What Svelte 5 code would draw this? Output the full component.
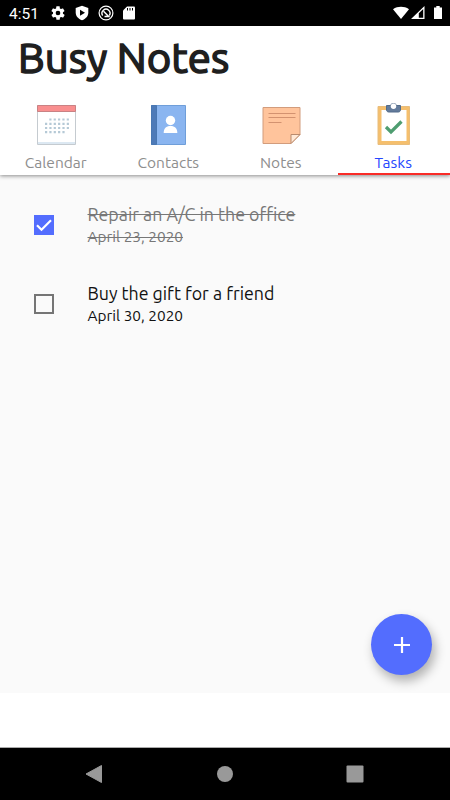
<script lang="ts">
  type Task = { title: string; date: string; done: boolean };

  const tabs = ["Calendar", "Contacts", "Notes", "Tasks"];
  let active = $state("Tasks");

  let tasks: Task[] = $state([
    { title: "Repair an A/C in the office", date: "April 23, 2020", done: true },
    { title: "Buy the gift for a friend", date: "April 30, 2020", done: false },
  ]);
</script>

<div class="screen">
  <!-- Status bar -->
  <div class="status">
    <span class="time">4:51</span>
    <svg width="16" height="16" viewBox="0 0 24 24" fill="#fff">
      <path
        fill-rule="evenodd"
        d="M19.4 13a7.5 7.5 0 0 0 0-2l2.1-1.6a.5.5 0 0 0 .1-.6l-2-3.5a.5.5 0 0 0-.6-.2l-2.5 1a7.3 7.3 0 0 0-1.7-1L14.5 2.4A.5.5 0 0 0 14 2h-4a.5.5 0 0 0-.5.4l-.4 2.7c-.6.2-1.2.6-1.7 1l-2.5-1a.5.5 0 0 0-.6.2l-2 3.5a.5.5 0 0 0 .1.6L4.6 11a7.5 7.5 0 0 0 0 2l-2.1 1.6a.5.5 0 0 0-.1.6l2 3.5c.1.2.4.3.6.2l2.5-1c.5.4 1.1.7 1.7 1l.4 2.7c0 .2.2.4.5.4h4c.3 0 .5-.2.5-.4l.4-2.7c.6-.3 1.2-.6 1.7-1l2.5 1c.2.1.5 0 .6-.2l2-3.5a.5.5 0 0 0-.1-.6zM12 15.5a3.5 3.5 0 1 1 0-7 3.5 3.5 0 0 1 0 7z"
      />
    </svg>
    <svg width="16" height="16" viewBox="0 0 16 16">
      <path d="M8 .7 14.3 3v4.500c0 3.600-2.500 6.300-6.300 7.800-3.800-1.500-6.300-4.200-6.300-7.800V3z" fill="#fff" />
      <path d="M6 4.700v6l5-3z" fill="#000" />
    </svg>
    <svg width="16" height="16" viewBox="0 0 16 16" fill="none" stroke="#fff">
      <circle cx="8" cy="8" r="6.900" stroke-width="1.200" />
      <path d="M4.700 10.500A4 4 0 1 1 11.300 10.500" stroke-width="1.400" />
      <path d="M5.500 6.300 10.700 11.500H6.500" stroke-width="1.500" />
    </svg>
    <svg width="14" height="16" viewBox="0 0 14 16">
      <path d="M5 1.500h7a1 1 0 0 1 1 1v11a1 1 0 0 1-1 1H2a1 1 0 0 1-1-1v-8z" fill="#fff" />
      <path d="M5.500 3v2.500M8 3v2.500M10.500 3v2.500" stroke="#000" />
    </svg>
    <svg class="system" width="52" height="16" viewBox="0 0 52 16" fill="#fff">
      <path d="M1 4.200C5.800 1 12.200 1 17 4.200L9 14z" />
      <path fill-rule="evenodd" d="M32.500 1v13H19zM26.800 8.300v4.500h4.400V4z" />
      <path d="M44.300 1h3.400v1.500H50V14h-8V2.500h2.300z" />
    </svg>
  </div>

  <header>
    <h1>Busy Notes</h1>
    <nav class="tabs">
      {#each tabs as tab}
        <button class="tab" class:active={active === tab} onclick={() => (active = tab)}>
          <svg width="42" height="44" viewBox="0 0 42 44">
            {#if tab === "Calendar"}
              <path d="M2.500 4.500h38v39h-38z" fill="#fff" stroke="#c5cbd0" />
              <path d="M3 41h37v2H3z" fill="#dce8f2" />
              <path d="M2.500 4.500h38v6h-38z" fill="#f98f8f" stroke="#c98284" />
              <g stroke="#b5c9d6" stroke-width="2.200" stroke-dasharray="2.200 2.150">
                <path d="M14.300 18.500h20.500M10 22.800h25M10 27h25M10 31.200h20" />
              </g>
            {:else if tab === "Contacts"}
              <path d="M4.500 4.500h34v39h-34z" fill="#8ab5f0" stroke="#6f9ed9" />
              <path d="M4.500 4.500h5v39h-5z" fill="#4d7ab8" stroke="#4877b2" />
              <circle cx="23.500" cy="19.500" r="4.700" fill="#fff" />
              <path d="M16.700 32c0-4.800 2.400-7 6.800-7s6.800 2.200 6.800 7z" fill="#fff" />
            {:else if tab === "Notes"}
              <path d="M3 6.500h37v27l-9 9H3z" fill="#ffc49c" stroke="#d29c7c" />
              <path d="M31 42.500v-9h9z" fill="#ffe8d5" stroke="#b98b6e" />
              <path d="M8.500 12.500h27M8.500 16.500h27M8.500 21.500h13" stroke="#d39270" />
            {:else}
              <path d="M6 5.500h31.500v38H6z" fill="#f5bf6d" stroke="#e8bd7c" />
              <path d="M9.500 9h25v31h-25z" fill="#fff" />
              <path d="M14.500 4.500h4c.3-2.500 5.700-2.500 6 0h4V9c0 1-1 2-2 2h-10c-1 0-2-1-2-2z" fill="#637b9b" stroke="#526b8a" />
              <circle cx="21.500" cy="5.300" r="2.700" fill="#fff" />
              <path d="m14 26 5 5L29.500 20.500" fill="none" stroke="#4e9d70" stroke-width="3.200" />
            {/if}
          </svg>
          <span>{tab}</span>
        </button>
      {/each}
    </nav>
  </header>

  <main>
    {#each tasks as task}
      <label class="task" class:done={task.done}>
        <input type="checkbox" bind:checked={task.done} />
        <span class="box">
          {#if task.done}
            <svg width="20" height="20" viewBox="0 0 20 20">
              <path d="m3 10.300 4.500 4.500L17 5.300" fill="none" stroke="#fff" stroke-width="2.200" />
            </svg>
          {/if}
        </span>
        <span class="text">
          <span class="title">{task.title}</span>
          <span class="date">{task.date}</span>
        </span>
      </label>
    {/each}
    <button class="fab" aria-label="Add task">
      <svg width="16" height="16" viewBox="0 0 16 16">
        <path d="M8 0v16M0 8h16" stroke="#fff" stroke-width="2.200" />
      </svg>
    </button>
  </main>

  <div class="banner"></div>

  <!-- System navigation -->
  <div class="navbar">
    <svg width="18" height="20" viewBox="0 0 18 20"><path d="M16.500 1.500v17L1 10z" fill="#999" stroke="#999" stroke-linejoin="round" /></svg>
    <svg width="18" height="18" viewBox="0 0 18 18"><circle cx="9" cy="9" r="8" fill="#999" /></svg>
    <svg width="18" height="18" viewBox="0 0 18 18"><rect x=".5" y=".5" width="17" height="17" rx="1" fill="#999" /></svg>
  </div>
</div>

<style>
  .screen {
    display: flex;
    flex-direction: column;
    width: 450px;
    height: 800px;
    overflow: hidden;
    background: #fff;
    font-family: Ubuntu, "Noto Sans", sans-serif;
  }
  .status {
    display: flex;
    align-items: center;
    gap: 8px;
    height: 26px;
    padding: 0 6px 0 9px;
    box-sizing: border-box;
    background: #000;
    color: #fff;
    flex: none;
  }
  .time {
    width: 33px;
    padding-top: 2px;
    font: 15.5px/24px Roboto, sans-serif;
    white-space: nowrap;
  }
  .system {
    margin-left: auto;
  }
  header {
    position: relative;
    z-index: 1;
    height: 149px;
    flex: none;
    background: #fff;
    box-shadow: 0 1px 4px rgba(0, 0, 0, 0.45);
  }
  h1 {
    margin: 0;
    padding: 4px 0 0 18px;
    height: 71px;
    box-sizing: border-box;
    font-size: 42px;
    line-height: 56px;
    font-weight: 400;
    -webkit-text-stroke: 1.6px #1f1f1f;
    color: #1f1f1f;
  }
  .tabs {
    display: grid;
    grid-template-columns: repeat(4, 1fr);
    height: 78px;
  }
  .tab {
    display: flex;
    flex-direction: column;
    align-items: center;
    padding: 4px 1px 0 0;
    border: 0;
    border-bottom: 2px solid transparent;
    background: none;
    font: inherit;
    font-size: 15.5px;
    line-height: 20px;
    color: #8e8e8e;
  }
  .tab svg {
    flex: none;
  }
  .tab span {
    margin-top: 8px;
  }
  .tab.active {
    color: #2546ff;
    border-bottom-color: #f92b27;
  }
  main {
    position: relative;
    height: 518px;
    flex: none;
    background: #fafafa;
  }
  .task {
    display: flex;
    align-items: center;
    height: 78px;
    padding: 11px 0 0 34px;
    box-sizing: border-box;
    color: #111;
  }
  .task + .task {
    margin-top: 1px;
  }
  .task input {
    position: absolute;
    opacity: 0;
  }
  .box {
    width: 20px;
    height: 20px;
    margin-top: 11px;
    box-sizing: border-box;
    border: 2px solid #757575;
  }
  .box svg {
    display: block;
  }
  .done .box {
    border: 0;
    background: #536dfe;
  }
  .text {
    display: flex;
    flex-direction: column;
    margin: 11px 0 0 33.5px;
  }
  .title {
    font-size: 17.8px;
    line-height: 23px;
  }
  .date {
    font-size: 15.4px;
    line-height: 21px;
  }
  .done .text {
    color: #777;
  }
  .done .title,
  .done .date {
    align-self: flex-start;
    text-decoration: line-through;
  }
  .fab {
    position: absolute;
    right: 18px;
    bottom: 18px;
    display: grid;
    place-items: center;
    width: 61px;
    height: 61px;
    padding: 0;
    border: 0;
    border-radius: 50%;
    background: #536dfe;
    box-shadow: 3px 6px 11px rgba(0, 0, 0, 0.3);
  }
  .banner {
    height: 54px;
    flex: none;
  }
  .navbar {
    display: flex;
    align-items: center;
    justify-content: space-between;
    flex: 1;
    padding: 0 86px 0 85px;
    border-top: 1px solid #aaa;
    background: #000;
  }
</style>
